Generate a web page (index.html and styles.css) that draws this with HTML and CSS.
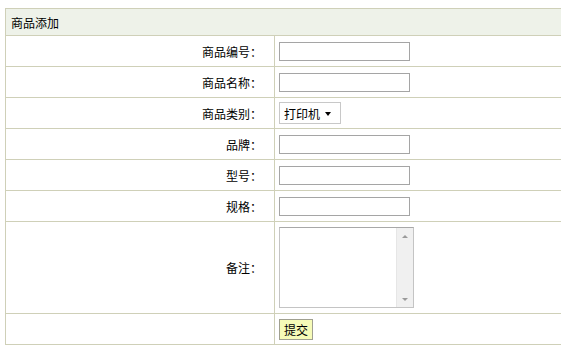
FILE: index.html
```html
<!DOCTYPE html>
<html lang="zh-CN">
<head>
  <meta charset="UTF-8">
  <title>商品添加</title>
  <link rel="stylesheet" href="styles.css">
</head>
<body>
  <!-- 商品添加表单 -->
  <form action="#" method="post">
    <table class="form-table">
      <colgroup>
        <col class="col-label">
        <col>
      </colgroup>
      <thead>
        <tr>
          <th colspan="2" class="title">商品添加</th>
        </tr>
      </thead>
      <tbody>
        <tr>
          <td class="label">商品编号：</td>
          <td class="field"><input type="text" class="text-input"></td>
        </tr>
        <tr>
          <td class="label">商品名称：</td>
          <td class="field"><input type="text" class="text-input"></td>
        </tr>
        <tr>
          <td class="label">商品类别：</td>
          <td class="field">
            <span class="select-wrap">
              <select class="select-input">
                <option>打印机</option>
                <option>复印机</option>
                <option>扫描仪</option>
              </select>
            </span>
          </td>
        </tr>
        <tr>
          <td class="label">品牌：</td>
          <td class="field"><input type="text" class="text-input"></td>
        </tr>
        <tr>
          <td class="label">型号：</td>
          <td class="field"><input type="text" class="text-input"></td>
        </tr>
        <tr>
          <td class="label">规格：</td>
          <td class="field"><input type="text" class="text-input"></td>
        </tr>
        <tr class="memo-row">
          <td class="label">备注：</td>
          <td class="field">
            <div class="memo-box">
              <textarea class="memo"></textarea>
              <div class="fake-scroll">
                <span class="arrow-up"></span>
                <span class="arrow-down"></span>
              </div>
            </div>
          </td>
        </tr>
        <tr>
          <td class="label"></td>
          <td class="field"><button type="submit" class="submit-btn">提交</button></td>
        </tr>
      </tbody>
    </table>
  </form>
</body>
</html>
```

FILE: styles.css
```css
/* 全体 */
body {
  margin: 8px 0 0 5px;
  font-family: "Noto Sans CJK SC", "Liberation Sans", sans-serif;
  font-size: 12px;
  color: #000;
  background: #fff;
}
form {
  margin: 0;
}
/* テーブル */
.form-table {
  border-collapse: collapse;
  width: 100%;
  table-layout: fixed;
}
.col-label {
  width: 269px;
}
.form-table th,
.form-table td {
  border: 1px solid #cfd0b8;
  padding: 0;
  height: 30px;
}
.form-table th,
.form-table td.field {
  border-right: none;
}
.title {
  height: 26px !important;
  background-color: #eef2e9;
  text-align: left;
  font-weight: normal;
  padding-left: 5px !important;
}
.label {
  text-align: right;
  padding-right: 12px !important;
}
.field {
  padding-left: 4px !important;
}
.memo-row td {
  height: 91px;
}
/* 入力欄 */
.text-input {
  box-sizing: border-box;
  width: 131px;
  height: 19px;
  margin: 0;
  border: 1px solid #a5a5a5;
  padding: 1px 3px;
  font: inherit;
  vertical-align: middle;
}
/* セレクト */
.select-wrap {
  position: relative;
  display: inline-block;
  vertical-align: middle;
}
.select-wrap::after {
  content: "";
  position: absolute;
  right: 10px;
  top: 10px;
  border-left: 3px solid transparent;
  border-right: 3px solid transparent;
  border-top: 4px solid #000;
  pointer-events: none;
}
.select-input {
  box-sizing: border-box;
  display: block;
  height: 22px;
  width: 62px;
  margin: 0;
  padding: 0 0 0 4px;
  border: 1px solid #c8c8c8;
  background: #fff;
  font-family: inherit;
  font-size: 12px;
  -webkit-appearance: none;
  appearance: none;
}
/* 備考欄 */
.memo-box {
  box-sizing: border-box;
  display: flex;
  width: 135px;
  height: 81px;
  border: 1px solid #c4c4c4;
  border-top-color: #a8a8a8;
}
.memo {
  flex: 1;
  min-width: 0;
  margin: 0;
  border: none;
  padding: 2px;
  outline: none;
  resize: none;
  overflow: hidden;
  font: inherit;
}
.fake-scroll {
  width: 16px;
  background: #f0f0f0;
  border-left: 1px solid #e6e6e6;
  display: flex;
  flex-direction: column;
  justify-content: space-between;
  align-items: center;
  padding: 7px 0 6px;
}
.arrow-up {
  border-left: 3px solid transparent;
  border-right: 3px solid transparent;
  border-bottom: 3px solid #9a9a9a;
}
.arrow-down {
  border-left: 3px solid transparent;
  border-right: 3px solid transparent;
  border-top: 3px solid #9a9a9a;
}
/* ボタン */
.submit-btn {
  box-sizing: border-box;
  height: 21px;
  padding: 0 4px;
  margin: 0;
  border: 1px solid #a0a090;
  background: #f6fbb8;
  font-family: inherit;
  font-size: 12px;
  color: #000;
  vertical-align: middle;
}
```
